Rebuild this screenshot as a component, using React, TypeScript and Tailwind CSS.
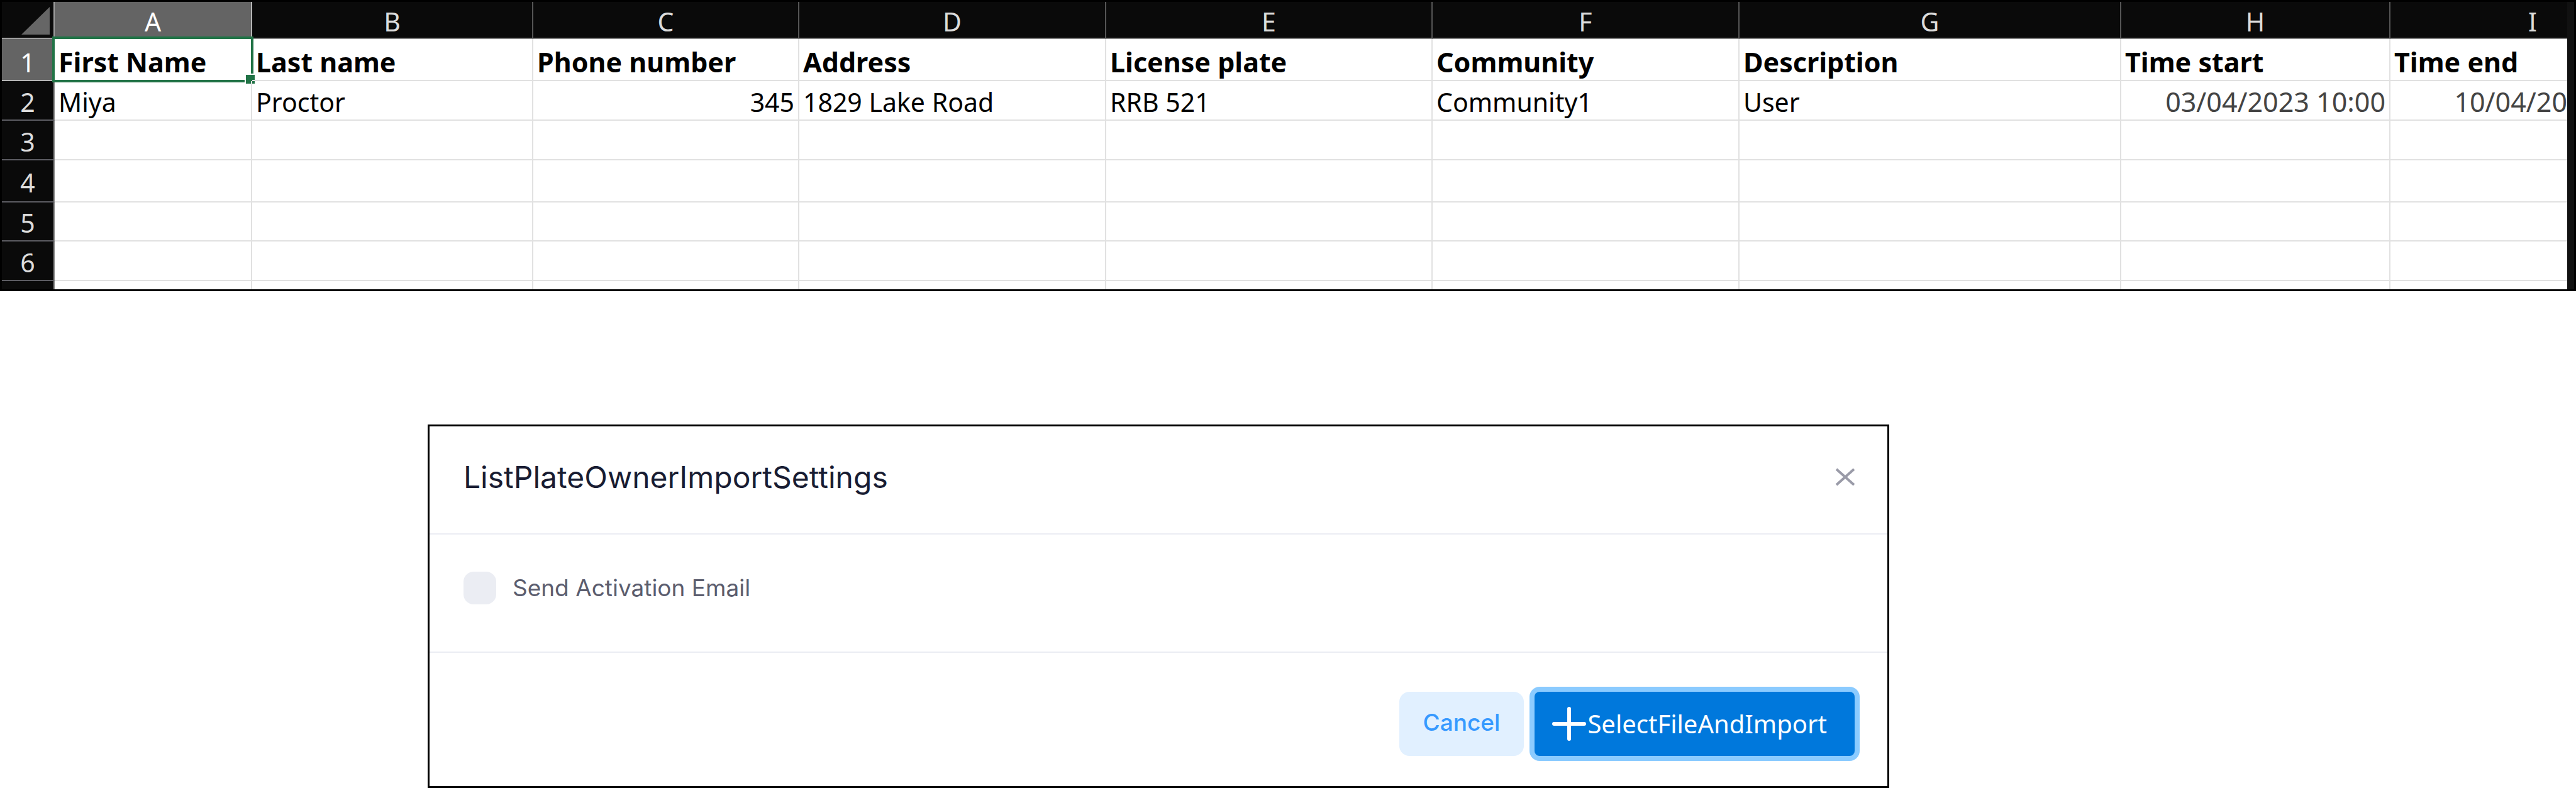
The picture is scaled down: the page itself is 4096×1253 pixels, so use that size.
import React from "react";

const COLUMNS = ["A", "B", "C", "D", "E", "F", "G", "H", "I"];

type Cell = { text: string; className?: string };
type Row = { id: number; height: string; bold?: boolean; cells: Cell[] };

const EMPTY: Cell[] = COLUMNS.map(() => ({ text: "" }));

const ROWS: Row[] = [
  {
    id: 1,
    height: "h-[67px]",
    bold: true,
    cells: [
      { text: "First Name" },
      { text: "Last name" },
      { text: "Phone number" },
      { text: "Address" },
      { text: "License plate" },
      { text: "Community" },
      { text: "Description" },
      { text: "Time start" },
      { text: "Time end" },
    ],
  },
  {
    id: 2,
    height: "h-[63px]",
    cells: [
      { text: "Miya" },
      { text: "Proctor" },
      { text: "345", className: "text-right" },
      { text: "1829 Lake Road" },
      { text: "RRB 521" },
      { text: "Community1" },
      { text: "User" },
      { text: "03/04/2023 10:00", className: "text-right text-[43px] text-[#444444]" },
      { text: "10/04/20", className: "text-right text-[43px] text-[#444444] pr-0" },
    ],
  },
  { id: 3, height: "h-[63px]", cells: EMPTY },
  { id: 4, height: "h-[67px]", cells: EMPTY },
  { id: 5, height: "h-[62px]", cells: EMPTY },
  { id: 6, height: "h-[63px]", cells: EMPTY },
];

function Sheet() {
  return (
    <div className="border-[3px] border-black bg-[#111111] pr-[11px]">
      <table className="w-full table-fixed border-separate border-spacing-0 bg-white text-[41px] leading-[52px]">
        <colgroup>
          <col className="w-[84px]" />
          <col className="w-[314px]" />
          <col className="w-[447px]" />
          <col className="w-[423px]" />
          <col className="w-[488px]" />
          <col className="w-[519px]" />
          <col className="w-[488px]" />
          <col className="w-[607px]" />
          <col className="w-[428px]" />
          <col />
        </colgroup>
        <thead>
          <tr className="h-[59px] bg-[#0a0a0a] text-[#dcdcdc]">
            <th className="border-r-2 border-b-2 border-[#a0a0a0] p-0">
              <svg className="ml-auto mr-1 block h-[48px] w-[48px]" viewBox="0 0 48 48" aria-hidden="true">
                <path d="M46 3V47H1Z" fill="#666666" />
              </svg>
            </th>
            {COLUMNS.map((c) => (
              <th
                key={c}
                scope="col"
                className={
                  c === "A"
                    ? "border-r-2 border-b-2 border-[#b5b5b5] bg-[#646464] p-0 pt-1 font-normal text-white"
                    : c === "I"
                      ? "border-b-2 border-[#808080] p-0 pt-1 pr-12 text-right font-normal"
                      : "border-r-2 border-b-2 border-r-[#555555] border-b-[#808080] p-0 pt-1 font-normal"
                }
              >
                {c}
              </th>
            ))}
          </tr>
        </thead>
        <tbody>
          {ROWS.map((row) => (
            <tr key={row.id} className={row.height}>
              <th
                scope="row"
                className={
                  row.id === 1
                    ? "border-r-2 border-b-2 border-[#b5b5b5] bg-[#646464] p-0 pt-2 font-normal text-white"
                    : "border-r-2 border-b-2 border-r-[#8a8a8a] border-b-[#5c5c62] bg-[#0a0a0a] p-0 pt-1 font-normal text-[#dcdcdc]"
                }
              >
                {row.id}
              </th>
              {row.cells.map((cell, i) => (
                <td
                  key={COLUMNS[i]}
                  className={[
                    "relative border-b-2 border-[#e1e1e1] pb-0 whitespace-nowrap",
                    i < 8 ? "border-r-2" : "",
                    cell.className?.includes("pr-0") ? "" : "px-1.5",
                    row.bold ? "pt-2 text-[43px] font-bold" : "pt-1",
                    cell.className ?? "",
                  ].join(" ")}
                >
                  {cell.text}
                  {row.id === 1 && i === 0 && (
                    <span className="absolute -top-1 -right-1 -bottom-1 -left-1 border-4 border-[#217346]">
                      <span className="absolute -right-1.5 -bottom-1.5 h-4 w-4 border-t-2 border-l-2 border-white bg-[#217346]" />
                    </span>
                  )}
                </td>
              ))}
            </tr>
          ))}
          <tr className="h-[13px]">
            <th className="border-r-2 border-[#8a8a8a] bg-[#0a0a0a] p-0" />
            {COLUMNS.map((c) => (
              <td key={c} className={c === "I" ? "p-0" : "border-r-2 border-[#e1e1e1] p-0"} />
            ))}
          </tr>
        </tbody>
      </table>
    </div>
  );
}

function ImportDialog() {
  return (
    <section
      role="dialog"
      aria-labelledby="dialog-title"
      className="mt-[212px] mr-[26.66%] ml-[16.6%] border-[3px] border-black bg-white font-[Inter,sans-serif]"
    >
      <header className="flex h-[172px] items-center justify-between border-b-2 border-[#ebedf3] pr-[51px] pb-2 pl-[54px]">
        <h1 id="dialog-title" className="text-[48px] leading-[60px] text-[#181c32]">
          ListPlateOwnerImportSettings
        </h1>
        <button type="button" aria-label="Close" className="text-[#9a9ba8]">
          <svg className="h-8 w-8" viewBox="0 0 32 32" fill="none" stroke="currentColor" strokeWidth="4">
            <path d="M2 3L30 28M30 3L2 28" />
          </svg>
        </button>
      </header>
      <div className="flex h-[188px] items-center border-b-2 border-[#ebedf3] pb-4 pl-[54px]">
        <label className="flex items-center gap-[26px] text-[37px] leading-[52px] text-[#5b5d6e]">
          <input type="checkbox" className="h-[52px] w-[52px] appearance-none rounded-2xl bg-[#ebedf3]" />
          Send Activation Email
        </label>
      </div>
      <footer className="flex justify-end gap-[17px] pt-[62px] pr-[52px] pb-12">
        <button type="button" className="h-[102px] rounded-2xl bg-[#e1f0ff] px-[38px] pb-1 text-[37px] font-medium text-[#3699ff]">
          Cancel
        </button>
        <button
          type="button"
          className="flex h-[102px] items-center gap-0.5 rounded-lg bg-[#0078dc] pr-11 pl-7 font-['Noto_Sans',sans-serif] text-[40px] text-white ring-8 ring-[#8bcbff]"
        >
          <svg className="h-[54px] w-[54px]" viewBox="0 0 54 54" fill="none" stroke="currentColor" strokeWidth="6" strokeLinecap="round" aria-hidden="true">
            <path d="M27 3V51M3 27H51" />
          </svg>
          SelectFileAndImport
        </button>
      </footer>
    </section>
  );
}

export default function App() {
  return (
    <main className="min-h-screen bg-white font-['Noto_Sans',sans-serif] text-black">
      <Sheet />
      <ImportDialog />
    </main>
  );
}
